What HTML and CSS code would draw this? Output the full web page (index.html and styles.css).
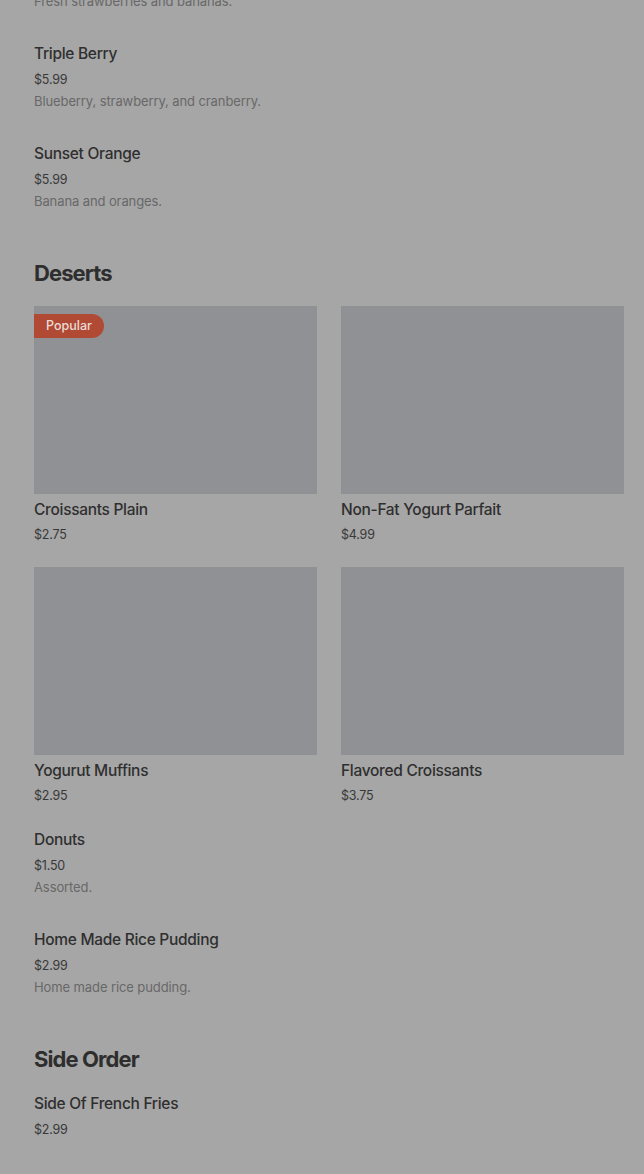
FILE: index.html
```html
<!doctype html>
<html>

<head>
    <meta charset="utf-8">
    <title>Menu</title>
    <link rel="stylesheet" href="styles.css">
</head>

<body>
    <div class="menu">
        <!-- scrolled into the middle of the smoothies list -->
        <div class="item first">
            <p class="item-desc">Fresh strawberries and bananas.</p>
        </div>
        <div class="item">
            <h3 class="item-name">Triple Berry</h3>
            <p class="item-price">$5.99</p>
            <p class="item-desc">Blueberry, strawberry, and cranberry.</p>
        </div>
        <div class="item">
            <h3 class="item-name">Sunset Orange</h3>
            <p class="item-price">$5.99</p>
            <p class="item-desc">Banana and oranges.</p>
        </div>

        <section class="section">
            <h2 class="section-title">Deserts</h2>
            <div class="grid">
                <div class="card">
                    <div class="card-img">
                        <span class="badge">Popular</span>
                    </div>
                    <h3 class="item-name">Croissants Plain</h3>
                    <p class="item-price">$2.75</p>
                </div>
                <div class="card">
                    <div class="card-img"></div>
                    <h3 class="item-name">Non-Fat Yogurt Parfait</h3>
                    <p class="item-price">$4.99</p>
                </div>
                <div class="card">
                    <div class="card-img"></div>
                    <h3 class="item-name">Yogurut Muffins</h3>
                    <p class="item-price">$2.95</p>
                </div>
                <div class="card">
                    <div class="card-img"></div>
                    <h3 class="item-name">Flavored Croissants</h3>
                    <p class="item-price">$3.75</p>
                </div>
            </div>
            <div class="item">
                <h3 class="item-name">Donuts</h3>
                <p class="item-price">$1.50</p>
                <p class="item-desc">Assorted.</p>
            </div>
            <div class="item">
                <h3 class="item-name">Home Made Rice Pudding</h3>
                <p class="item-price">$2.99</p>
                <p class="item-desc">Home made rice pudding.</p>
            </div>
        </section>

        <section class="section">
            <h2 class="section-title">Side Order</h2>
            <div class="item">
                <h3 class="item-name">Side Of French Fries</h3>
                <p class="item-price">$2.99</p>
            </div>
        </section>
    </div>
</body>

</html>
```

FILE: styles.css
```css
html,
body {
    margin: 0;
    padding: 0;
    background: #a6a6a6;
}

body {
    font-family: Inter, "Noto Sans", sans-serif;
    color: #2f2f2f;
    overflow: hidden;
}

h2,
h3,
p {
    margin: 0;
}

.menu {
    padding: 0 20px 0 34px;
    margin-top: -9px;
}

/* list items */
.item {
    padding: 15px 0;
}

.item.first {
    padding-top: 0;
}

.item-name {
    font-size: 15.5px;
    font-weight: 500;
    line-height: 24px;
    letter-spacing: -0.3px;
    color: #2f2f2f;
    margin-top: 1px;
}

.item-price {
    font-size: 12.5px;
    line-height: 24px;
    margin-top: 2px;
    letter-spacing: -0.2px;
    color: #383838;
}

.item-desc {
    font-size: 13px;
    line-height: 20px;
    letter-spacing: -0.1px;
    color: #686868;
    margin-top: -1px;
}

.item.first .item-desc {
    margin-top: 0;
}

/* sections */
.section {
    margin-top: 33px;
}

.section-title {
    font-size: 22px;
    font-weight: 700;
    line-height: 28px;
    letter-spacing: -0.9px;
    color: #2e2e2e;
    margin-bottom: 3px;
}

.grid {
    display: grid;
    grid-template-columns: 1fr 1fr;
    column-gap: 24px;
    row-gap: 20px;
    margin: 19px 0 4px;
}

.card-img {
    position: relative;
    height: 188px;
    background: #8f9194;
}

.card .item-name {
    margin-top: 4px;
}

.card .item-price {
    margin-top: 1px;
}

.badge {
    position: absolute;
    top: 8px;
    left: 0;
    height: 24px;
    line-height: 24px;
    padding: 0 12px;
    border-radius: 0 12px 12px 0;
    background: #b14a35;
    color: #eadbd6;
    font-size: 12.5px;
    font-weight: 500;
}
```
